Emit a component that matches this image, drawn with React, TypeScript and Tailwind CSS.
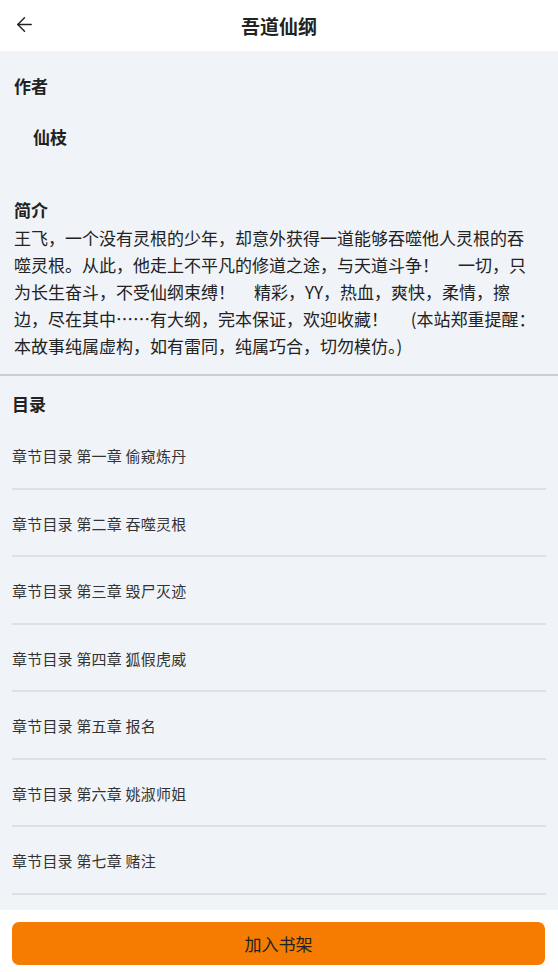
import { ArrowLeft } from 'lucide-react';

const chapters = [
  '第一章 偷窥炼丹',
  '第二章 吞噬灵根',
  '第三章 毁尸灭迹',
  '第四章 狐假虎威',
  '第五章 报名',
  '第六章 姚淑师姐',
  '第七章 赌注',
];

const intro =
  '王飞，一个没有灵根的少年，却意外获得一道能够吞噬他人灵根的吞噬灵根。从此，他走上不平凡的修道之途，与天道斗争！\u00a0\u00a0\u00a0\u00a0\u00a0一切，只为长生奋斗，不受仙纲束缚！\u00a0\u00a0\u00a0\u00a0\u00a0精彩，YY，热血，爽快，柔情，擦边，尽在其中……有大纲，完本保证，欢迎收藏！\u00a0\u00a0\u00a0\u00a0\u00a0\u00a0(本站郑重提醒：本故事纯属虚构，如有雷同，纯属巧合，切勿模仿。)';

const App = () => {
  return (
    <div
      className="flex h-[972px] w-[558px] flex-col overflow-hidden bg-[#f0f3f8] text-[#222]"
      style={{ fontFamily: '"Noto Sans CJK SC", "Noto Sans", sans-serif' }}
    >
      {/* Header */}
      <div className="relative flex h-[51px] shrink-0 items-center justify-center bg-white">
        <button className="absolute left-[12px] top-[12px] flex h-[24px] w-[24px] items-center justify-center">
          <ArrowLeft className="h-[23px] w-[23px]" strokeWidth={1.5} />
        </button>
        <h1 className="text-[19px] font-bold leading-none">吾道仙纲</h1>
      </div>

      <div className="flex-1 overflow-hidden">
        {/* Book info */}
        <div className="pl-[14px] pr-[18px] pt-[23px] pb-[15px]">
          <h2 className="text-[17px] font-bold leading-[24px]">作者</h2>
          <p className="mt-[27px] pl-[19px] text-[17px] font-bold leading-[24px]">仙枝</p>
          <h2 className="mt-[49px] text-[17px] font-bold leading-[24px]">简介</h2>
          <p className="mt-[2px] text-[17px] leading-[27px]">{intro}</p>
        </div>

        <div className="h-[2px] bg-[#cbcdd0]" />

        {/* Catalog */}
        <div className="px-[12px] pt-[16px]">
          <h2 className="text-[17px] font-bold leading-[24px]">目录</h2>
          <ul className="mt-[6px]">
            {chapters.map((c) => (
              <li
                key={c}
                className="border-b-2 border-[#dde0e4] pt-[24px] pb-[21.5px] text-[15px] leading-[20px] tracking-[0.2px] text-[#333]"
              >
                章节目录&nbsp;{c}
              </li>
            ))}
          </ul>
        </div>
      </div>

      {/* Footer */}
      <div className="h-[62px] shrink-0 bg-white px-[12px] pt-[12px]">
        <button className="h-[43px] w-[533px] rounded-[7px] bg-[#f57c00] text-[17px] text-[#222]">
          加入书架
        </button>
      </div>
    </div>
  );
};

export default App;
